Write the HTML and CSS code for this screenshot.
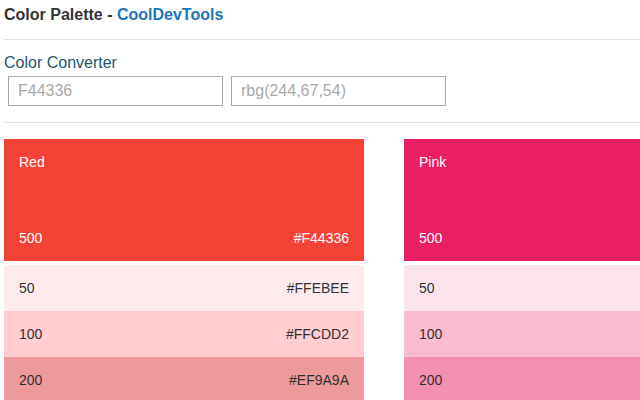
FILE: index.html
```html
<!DOCTYPE html>
<html>
<head>
<meta charset="utf-8">
<link rel="stylesheet" href="styles.css">
</head>
<body>
<div class="page">
  <h1 class="title">Color Palette - <a class="brand" href="#">CoolDevTools</a></h1>
  <hr class="rule rule-top">
  <div class="converter">
    <label class="conv-label">Color Converter</label>
    <div class="conv-inputs">
      <input class="conv-input" type="text" placeholder="F44336">
      <input class="conv-input" type="text" placeholder="rbg(244,67,54)">
    </div>
  </div>
  <hr class="rule rule-bottom">
  <div class="cards">
    <div class="card">
      <div class="card-head red-500">
        <div class="card-name">Red</div>
        <div class="shade-row"><span>500</span><span>#F44336</span></div>
      </div>
      <div class="shade red-50"><span>50</span><span>#FFEBEE</span></div>
      <div class="shade red-100"><span>100</span><span>#FFCDD2</span></div>
      <div class="shade red-200"><span>200</span><span>#EF9A9A</span></div>
    </div>
    <div class="card">
      <div class="card-head pink-500">
        <div class="card-name">Pink</div>
        <div class="shade-row"><span>500</span><span>#E91E63</span></div>
      </div>
      <div class="shade pink-50"><span>50</span><span>#FCE4EC</span></div>
      <div class="shade pink-100"><span>100</span><span>#F8BBD0</span></div>
      <div class="shade pink-200"><span>200</span><span>#F48FB1</span></div>
    </div>
  </div>
</div>
</body>
</html>
```
FILE: styles.css
```css
html, body {
  margin: 0;
  padding: 0;
  overflow: hidden;
  background: #fff;
}
body {
  font-family: "Liberation Sans", Arial, sans-serif;
  color: #333;
}
.page {
  padding-left: 4px;
}
.title {
  margin: 0;
  padding-top: 6px;
  font-size: 16px;
  line-height: 18px;
  font-weight: bold;
  color: #333;
}
.brand {
  color: #1a76bb;
  text-decoration: none;
}
.rule {
  border: 0;
  border-top: 1px solid #e0e0e0;
  margin: 0;
  height: 0;
}
.rule-top {
  margin-top: 15px;
}
.converter {
  padding-top: 14px;
}
.conv-label {
  display: block;
  font-size: 16px;
  line-height: 18px;
  color: #22566a;
}
.conv-inputs {
  display: flex;
  gap: 8px;
  margin-top: 4px;
  padding-left: 4px;
}
.conv-input {
  box-sizing: border-box;
  width: 215px;
  height: 30px;
  margin: 0;
  border: 1px solid #a9a9a9;
  padding: 0 9px;
  font-family: "Liberation Sans", Arial, sans-serif;
  font-size: 16px;
  color: #555;
  background: #fff;
  outline: none;
}
.conv-input::placeholder {
  color: #aaa;
}
.rule-bottom {
  margin-top: 16px;
}
.cards {
  display: flex;
  gap: 40px;
  margin-top: 16px;
}
.card {
  width: 360px;
  flex-shrink: 0;
  font-size: 14px;
  line-height: 16px;
}
.card-head {
  box-sizing: border-box;
  height: 122px;
  padding: 15px;
  display: flex;
  flex-direction: column;
  justify-content: space-between;
  color: #fff;
  margin-bottom: 4px;
}
.shade-row, .shade {
  display: flex;
  justify-content: space-between;
}
.shade {
  box-sizing: border-box;
  height: 46px;
  padding: 15px;
  color: #333;
}
.red-500 { background: #F44336; }
.red-50 { background: #FFEBEE; }
.red-100 { background: #FFCDD2; }
.red-200 { background: #EF9A9A; }
.pink-500 { background: #E91E63; }
.pink-50 { background: #FCE4EC; }
.pink-100 { background: #F8BBD0; }
.pink-200 { background: #F48FB1; }
```
